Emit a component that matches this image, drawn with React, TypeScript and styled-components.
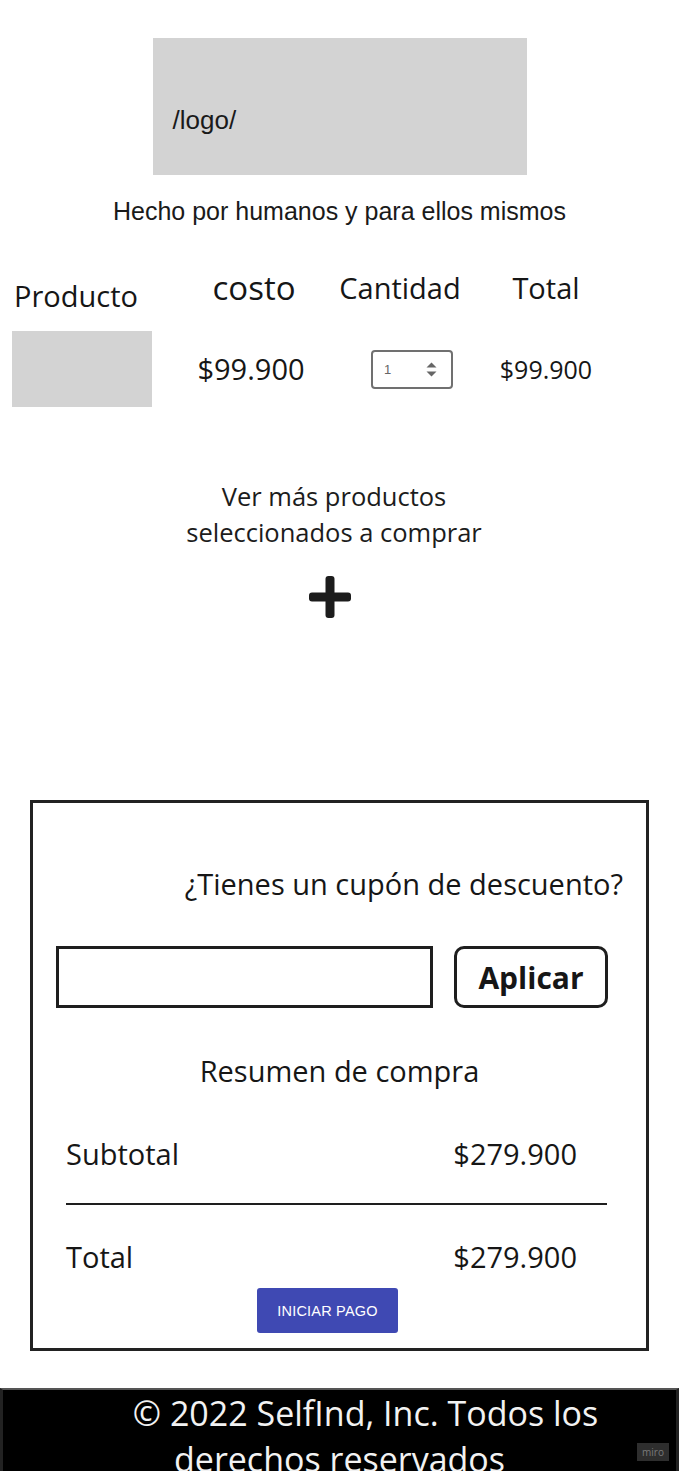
import React from 'react';
import styled, { createGlobalStyle } from 'styled-components';

const GlobalStyle = createGlobalStyle`
  body {
    margin: 0;
    background: #ffffff;
    color: #161616;
    font-family: 'Open Sans', 'Liberation Sans', sans-serif;
  }
`;

const Page = styled.div`
  width: 679px;
  display: flex;
  flex-direction: column;
  align-items: center;
`;

const LogoBox = styled.div`
  margin-top: 38px;
  width: 374px;
  height: 137px;
  box-sizing: border-box;
  padding: 67px 0 0 20px;
  background: #d3d3d3;
  font-family: 'Liberation Sans', Arial, sans-serif;
  font-size: 26px;
  line-height: 30px;
  color: #1a1a1a;
`;

const Tagline = styled.p`
  margin: 22px 0 0;
  font-family: 'Liberation Sans', Arial, sans-serif;
  font-size: 25px;
  line-height: 28px;
  color: #1a1a1a;
`;

const ProductGrid = styled.div`
  align-self: stretch;
  margin-top: 44px;
  padding-left: 12px;
  display: grid;
  grid-template-columns: 140px 198px 112px 168px;
  grid-template-rows: 38px 76px;
  row-gap: 24px;
  align-items: center;
  justify-items: center;
`;

const HeadCell = styled.div<{ $size?: number; $drop?: number; $shift?: number; $left?: boolean }>`
  font-size: ${(p) => p.$size ?? 29}px;
  line-height: 38px;
  justify-self: ${(p) => (p.$left ? 'start' : 'center')};
  padding-left: ${(p) => (p.$left ? 2 : 0)}px;
  transform: translate(${(p) => p.$shift ?? 0}px, ${(p) => p.$drop ?? 0}px);
  white-space: nowrap;
`;

const Thumb = styled.div`
  width: 140px;
  height: 76px;
  background: #d3d3d3;
`;

const Price = styled.div<{ $size: number }>`
  font-size: ${(p) => p.$size}px;
  line-height: 38px;
  white-space: nowrap;
`;

const QtyBox = styled.div`
  width: 82px;
  height: 39px;
  box-sizing: border-box;
  border: 2px solid #707070;
  border-radius: 4px;
  display: flex;
  align-items: center;
  justify-content: space-between;
  padding: 0 14px 0 11px;
  margin-left: 12px;
`;

const QtyInput = styled.input`
  width: 30px;
  border: none;
  outline: none;
  padding: 0;
  background: transparent;
  font-family: 'Liberation Sans', Arial, sans-serif;
  font-size: 13px;
  color: #666;
`;

const MoreText = styled.p`
  margin: 71px 11px 0 0;
  text-align: center;
  font-size: 25.5px;
  line-height: 36px;
  color: #1c1c1c;
`;

const PlusButton = styled.button`
  margin: 26px 20px 0 0;
  padding: 0;
  border: none;
  background: none;
  width: 42px;
  height: 42px;
  cursor: pointer;
`;

const CheckoutBox = styled.section`
  margin-top: 182px;
  width: 619px;
  box-sizing: border-box;
  border: 3px solid #222;
  padding: 62px 23px 15px;
  display: flex;
  flex-direction: column;
`;

const CouponTitle = styled.h2`
  margin: 0;
  text-align: right;
  font-weight: 400;
  font-size: 29px;
  line-height: 38px;
`;

const CouponRow = styled.div`
  margin-top: 43px;
  padding-right: 15px;
  display: flex;
  gap: 21px;
  height: 62px;
`;

const CouponInput = styled.input`
  flex: 1;
  box-sizing: border-box;
  border: 3px solid #1e1e1e;
  border-radius: 0;
  outline: none;
  font-family: 'Open Sans', sans-serif;
  font-size: 22px;
  padding: 0 10px;
`;

const ApplyButton = styled.button`
  width: 154px;
  box-sizing: border-box;
  border: 3px solid #1e1e1e;
  border-radius: 10px;
  background: #fff;
  font-family: 'Open Sans', sans-serif;
  font-weight: 700;
  font-size: 30px;
  color: #161616;
  padding: 0;
  cursor: pointer;
`;

const SummaryTitle = styled.h3`
  margin: 44px 0 0;
  text-align: center;
  font-weight: 400;
  font-size: 29px;
  line-height: 38px;
`;

const SummaryRow = styled.div<{ $gap: number }>`
  margin: ${(p) => p.$gap}px 16px 0 10px;
  display: flex;
  justify-content: space-between;
  font-size: 29px;
  line-height: 38px;
  padding-right: 30px;
`;

const Divider = styled.hr`
  margin: 30px 16px 0 10px;
  border: none;
  border-top: 2px solid #1e1e1e;
`;

const PayButton = styled.button`
  align-self: center;
  margin: 12px 24px 0 0;
  width: 141px;
  height: 45px;
  border: none;
  border-radius: 3px;
  background: #3f49b3;
  color: #fff;
  font-family: 'Liberation Sans', Arial, sans-serif;
  font-size: 14.5px;
  letter-spacing: 0.2px;
  cursor: pointer;
`;

const Footer = styled.footer`
  position: relative;
  margin-top: 37px;
  align-self: stretch;
  height: 90px;
  box-sizing: border-box;
  background: #000;
  border: 3px solid #222;
  border-top: 2px solid #555;
  padding: 0 40px;
  overflow: hidden;
  color: #f2f2f2;
  font-size: 34px;
  line-height: 46px;
  text-align: center;
  text-indent: 52px;
`;

const Badge = styled.span`
  position: absolute;
  right: 7px;
  top: 53px;
  width: 32px;
  height: 18px;
  background: #2e2e2e;
  color: #7a7a7a;
  font-size: 10px;
  line-height: 18px;
  text-indent: 0;
  text-align: center;
`;

const App = () => (
  <Page>
    <GlobalStyle />
    <LogoBox>/logo/</LogoBox>
    <Tagline>Hecho por humanos y para ellos mismos</Tagline>

    <ProductGrid>
      <HeadCell $left $drop={8}>Producto</HeadCell>
      <HeadCell $size={33} $shift={3}>costo</HeadCell>
      <HeadCell $shift={-6}>Cantidad</HeadCell>
      <HeadCell>Total</HeadCell>

      <Thumb />
      <Price $size={29}>$99.900</Price>
      <QtyBox>
        <QtyInput type="text" defaultValue="1" aria-label="Cantidad" />
        <svg width="11" height="15" viewBox="0 0 11 15">
          <path d="M5.5 0.5 L10.5 5.5 H0.5 Z" fill="#666" />
          <path d="M5.5 14.5 L10.5 9.5 H0.5 Z" fill="#666" />
        </svg>
      </QtyBox>
      <Price $size={25}>$99.900</Price>
    </ProductGrid>

    <MoreText>
      Ver más productos
      <br />
      seleccionados a comprar
    </MoreText>
    <PlusButton aria-label="Agregar">
      <svg width="42" height="42" viewBox="0 0 42 42">
        <rect x="16.5" y="0" width="9" height="42" rx="3" fill="#1c1c1c" />
        <rect x="0" y="16.5" width="42" height="9" rx="3" fill="#1c1c1c" />
      </svg>
    </PlusButton>

    <CheckoutBox>
      <CouponTitle>¿Tienes un cupón de descuento?</CouponTitle>
      <CouponRow>
        <CouponInput type="text" aria-label="Cupón" />
        <ApplyButton>Aplicar</ApplyButton>
      </CouponRow>

      <SummaryTitle>Resumen de compra</SummaryTitle>
      <SummaryRow $gap={45}>
        <span>Subtotal</span>
        <span>$279.900</span>
      </SummaryRow>
      <Divider />
      <SummaryRow $gap={33}>
        <span>Total</span>
        <span>$279.900</span>
      </SummaryRow>
      <PayButton>INICIAR PAGO</PayButton>
    </CheckoutBox>

    <Footer>
      © 2022 SelfInd, Inc. Todos los derechos reservados
      <Badge>miro</Badge>
    </Footer>
  </Page>
);

export default App;
